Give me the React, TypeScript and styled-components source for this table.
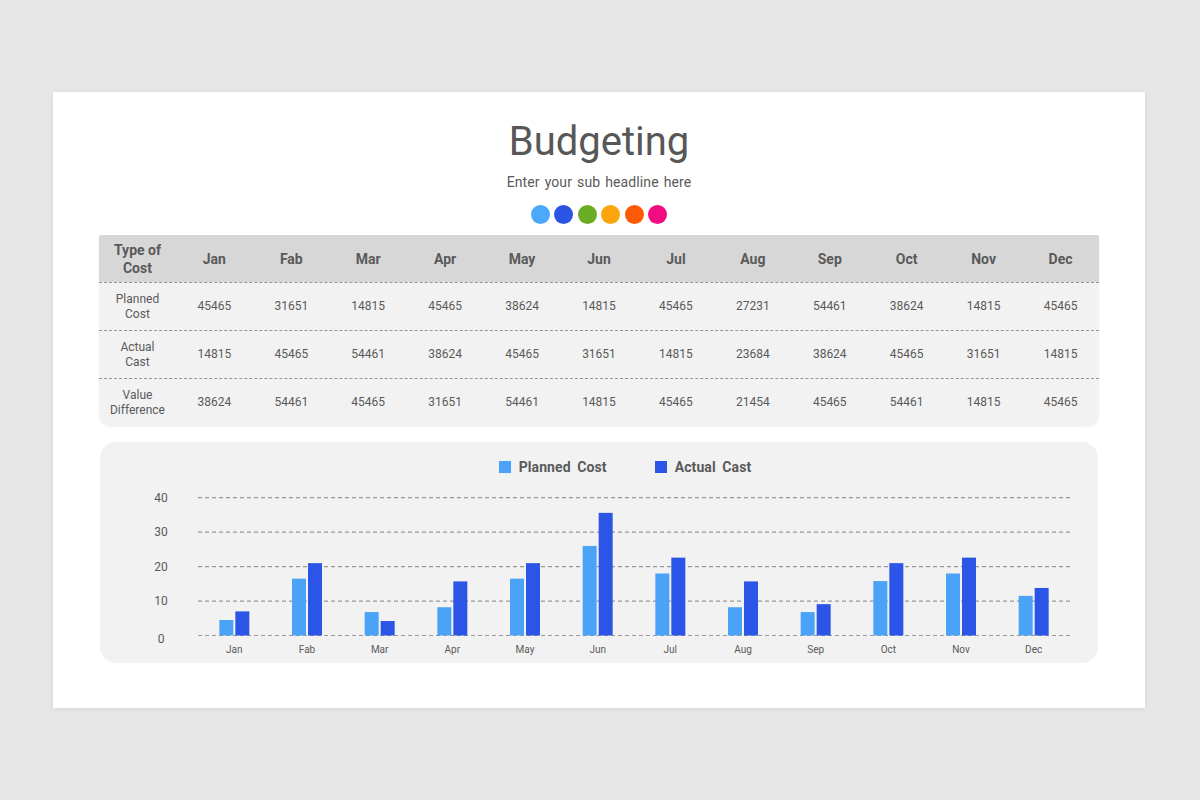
import React from "react";
import styled, { createGlobalStyle } from "styled-components";

const GlobalStyle = createGlobalStyle`
  html, body {
    margin: 0;
    padding: 0;
    background-color: #e8e7e8;
  }
  body {
    font-family: Roboto, "Liberation Sans", Arial, sans-serif;
  }
`;

const Page = styled.div`
  width: 1200px;
  height: 800px;
  padding: 92px 55px 92px 53px;
  box-sizing: border-box;
`;

const Card = styled.div`
  width: 1092px;
  height: 616px;
  background-color: #ffffff;
  box-shadow: 0 1px 6px rgba(0, 0, 0, 0.08);
  display: flex;
  flex-direction: column;
  align-items: center;
  padding: 26px 46px 0 46px;
  box-sizing: border-box;
`;

const Title = styled.h1`
  margin: 0;
  font-size: 40px;
  font-weight: 400;
  line-height: 48px;
  color: #575757;
`;

const SubTitle = styled.div`
  margin-top: 6px;
  font-size: 14px;
  line-height: 20px;
  color: #5a5a5a;
  letter-spacing: 0.1px;
  word-spacing: 1.5px;
`;

const Dots = styled.div`
  display: flex;
  gap: 4.5px;
  margin-top: 13px;
`;

const Dot = styled.span<{ $color: string }>`
  width: 19px;
  height: 19px;
  border-radius: 50%;
  background-color: ${(p) => p.$color};
`;

const Table = styled.div`
  width: 1000px;
  margin-top: 11px;
  border-radius: 2px 2px 12px 12px;
  overflow: hidden;
  background-color: #f2f2f2;
  box-shadow: 0 1px 2px rgba(0, 0, 0, 0.06);
`;

const TableRow = styled.div<{ $head?: boolean }>`
  display: grid;
  grid-template-columns: repeat(13, 1fr);
  height: ${(p) => (p.$head ? "47px" : "48px")};
  box-sizing: border-box;
  background-color: ${(p) => (p.$head ? "#d7d7d7" : "#f2f2f2")};
  border-top: ${(p) => (p.$head ? "none" : "1px dashed #959595")};
`;

const Cell = styled.div<{ $head?: boolean }>`
  display: flex;
  align-items: center;
  justify-content: center;
  text-align: center;
  color: #5a5a5a;
  font-size: ${(p) => (p.$head ? "14px" : "12px")};
  font-weight: ${(p) => (p.$head ? 700 : 400)};
  line-height: ${(p) => (p.$head ? "18px" : "15px")};
`;

const ChartPanel = styled.div`
  width: 998px;
  margin-top: 16px;
  background-color: #f2f2f2;
  border-radius: 16px;
  padding: 15px 0 3px 0;
  box-sizing: border-box;
  display: flex;
  flex-direction: column;
`;

const Legend = styled.div`
  display: flex;
  justify-content: center;
  align-items: center;
  gap: 48px;
  height: 20px;
  padding-left: 52px;
`;

const LegendItem = styled.div`
  display: flex;
  align-items: center;
  gap: 8px;
  font-size: 14px;
  font-weight: 700;
  color: #5a5a5a;
  letter-spacing: 0.1px;
  word-spacing: 3px;
`;

const LegendSwatch = styled.span<{ $color: string }>`
  width: 12px;
  height: 12px;
  background-color: ${(p) => p.$color};
`;

const Plot = styled.svg`
  display: block;
  margin-top: 5px;
  font-family: Roboto, "Liberation Sans", Arial, sans-serif;
`;

const months = ["Jan", "Fab", "Mar", "Apr", "May", "Jun", "Jul", "Aug", "Sep", "Oct", "Nov", "Dec"];

const rows = [
  {
    label: ["Planned", "Cost"],
    values: [45465, 31651, 14815, 45465, 38624, 14815, 45465, 27231, 54461, 38624, 14815, 45465],
  },
  {
    label: ["Actual", "Cast"],
    values: [14815, 45465, 54461, 38624, 45465, 31651, 14815, 23684, 38624, 45465, 31651, 14815],
  },
  {
    label: ["Value", "Difference"],
    values: [38624, 54461, 45465, 31651, 54461, 14815, 45465, 21454, 45465, 54461, 14815, 45465],
  },
];

const dotColors = ["#4ba8fb", "#2a55e3", "#6aad24", "#fba40c", "#fd5a06", "#f20c82"];

const LIGHT = "#4ba3f8";
const DARK = "#2a55e6";

const planned = [4.5, 16.5, 6.8, 8.2, 16.5, 26, 18, 8.2, 6.8, 15.8, 18, 11.5];
const actual = [7, 21, 4.2, 15.7, 21, 35.6, 22.6, 15.7, 9.1, 21, 22.6, 13.8];

const PLOT_W = 998;
const PLOT_H = 178;
const GRID_X0 = 98;
const GRID_X1 = 970;
const ZERO_Y = 153.5;
const PER_UNIT = 3.445;

const BarChart = () => {
  const step = (GRID_X1 - GRID_X0) / 12;
  return (
    <Plot width={PLOT_W} height={PLOT_H} viewBox={`0 0 ${PLOT_W} ${PLOT_H}`}>
      {[0, 10, 20, 30, 40].map((v) => {
        const y = ZERO_Y - v * PER_UNIT;
        return (
          <g key={v}>
            <line
              x1={GRID_X0}
              x2={GRID_X1}
              y1={y}
              y2={y}
              stroke="#999999"
              strokeWidth={1.2}
              strokeDasharray="4 3"
            />
            <text x={61} y={y + (v === 0 ? 7 : 4)} fontSize={12} fill="#5a5a5a" textAnchor="middle">
              {v}
            </text>
          </g>
        );
      })}
      {months.map((m, i) => {
        const cx = GRID_X0 + step * (i + 0.5);
        const hp = planned[i] * PER_UNIT;
        const ha = actual[i] * PER_UNIT;
        return (
          <g key={m}>
            <rect x={cx - 15} y={ZERO_Y - hp} width={14} height={hp} fill={LIGHT} />
            <rect x={cx + 1} y={ZERO_Y - ha} width={14} height={ha} fill={DARK} />
            <text x={cx} y={171} fontSize={10} fill="#5a5a5a" textAnchor="middle">
              {m}
            </text>
          </g>
        );
      })}
    </Plot>
  );
};

const App = () => {
  return (
    <Page>
      <GlobalStyle />
      <Card>
        <Title>Budgeting</Title>
        <SubTitle>Enter your sub headline here</SubTitle>
        <Dots>
          {dotColors.map((c) => (
            <Dot key={c} $color={c} />
          ))}
        </Dots>
        <Table>
          <TableRow $head>
            <Cell $head>
              Type of
              <br />
              Cost
            </Cell>
            {months.map((m) => (
              <Cell $head key={m}>
                {m}
              </Cell>
            ))}
          </TableRow>
          {rows.map((r) => (
            <TableRow key={r.label.join(" ")}>
              <Cell>
                {r.label[0]}
                <br />
                {r.label[1]}
              </Cell>
              {r.values.map((v, i) => (
                <Cell key={i}>{v}</Cell>
              ))}
            </TableRow>
          ))}
        </Table>
        <ChartPanel>
          <Legend>
            <LegendItem>
              <LegendSwatch $color={LIGHT} />
              Planned Cost
            </LegendItem>
            <LegendItem>
              <LegendSwatch $color={DARK} />
              Actual Cast
            </LegendItem>
          </Legend>
          <BarChart />
        </ChartPanel>
      </Card>
    </Page>
  );
};

export default App;
